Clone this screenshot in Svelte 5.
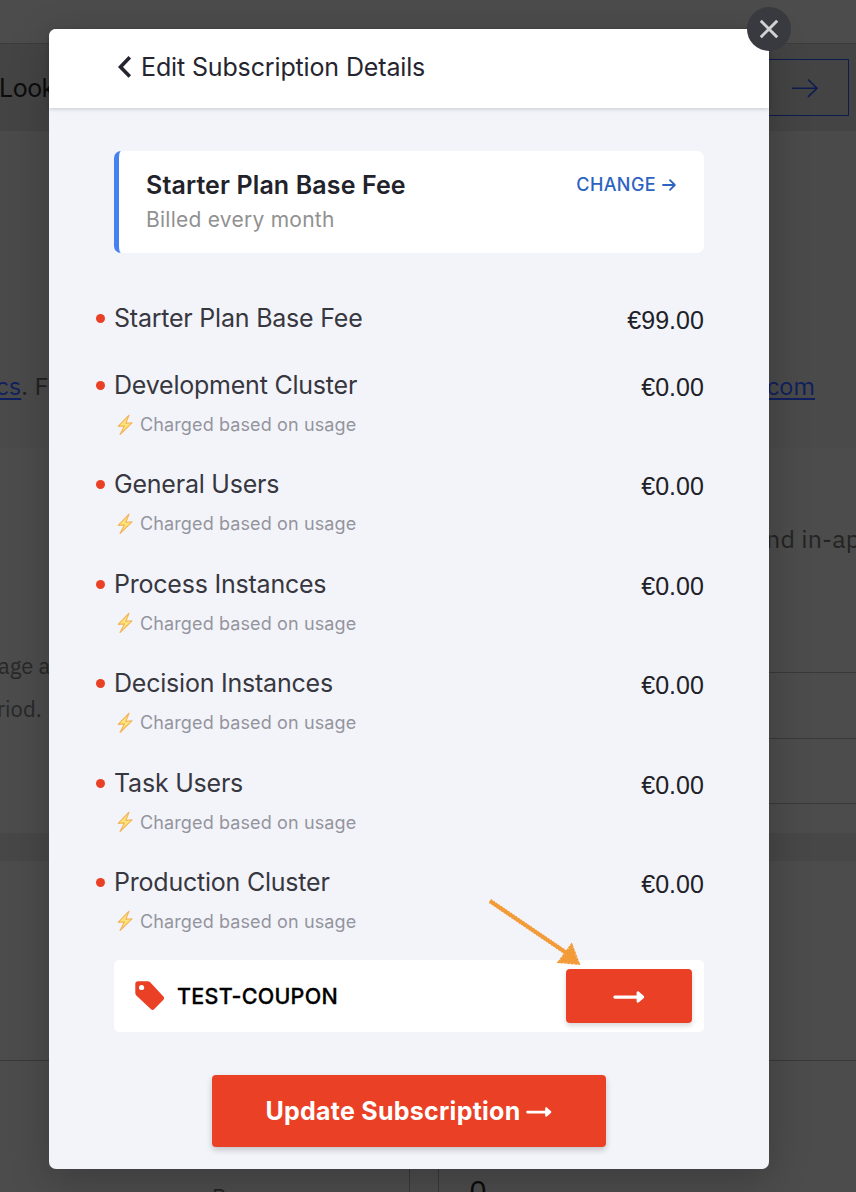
<script>
  const items = [
    { name: 'Starter Plan Base Fee', price: '€99.00', usage: false },
    { name: 'Development Cluster', price: '€0.00', usage: true },
    { name: 'General Users', price: '€0.00', usage: true },
    { name: 'Process Instances', price: '€0.00', usage: true },
    { name: 'Decision Instances', price: '€0.00', usage: true },
    { name: 'Task Users', price: '€0.00', usage: true },
    { name: 'Production Cluster', price: '€0.00', usage: true }
  ];
</script>

<div class="stage">
  <div class="page" aria-hidden="true">
    <div class="topbar"></div>
    <div class="banner">
      <span class="look">Look</span>
      <div class="banner-btn">
        <svg width="28" height="20" viewBox="0 0 28 20" fill="none" stroke="#0d1c50" stroke-width="1.6"><path d="M1 10.3h25M17 1.5l9 8.8-9 8.5" /></svg>
      </div>
    </div>
    <div class="notice">
      <p><span class="link">cs</span>. F</p>
      <p class="link com">com</p>
    </div>
    <div class="content">
      <div class="left">
        <p class="l1">age a</p>
        <p class="l2">riod.</p>
      </div>
      <div class="right">
        <p>nd in-ap</p>
        <div class="rule r1"></div>
        <div class="rule"></div>
        <div class="rule r3"></div>
      </div>
    </div>
    <div class="band"></div>
    <div class="panel"></div>
    <div class="tiles">
      <div class="tile first">P</div>
      <div class="tile second">0</div>
    </div>
  </div>

  <section class="modal">
    <header>
      <svg width="15" height="22" viewBox="0 0 15 22" fill="none" stroke="#25252f" stroke-width="3.6"><path d="M12.8 1.3 3.5 11l9.3 9.5" /></svg>
      <h1>Edit Subscription Details</h1>
    </header>
    <div class="body">
      <div class="plan">
        <div>
          <h2>Starter Plan Base Fee</h2>
          <p>Billed every month</p>
        </div>
        <a class="change">
          <span>CHANGE</span>
          <svg width="14" height="12" viewBox="0 0 14 12" fill="none" stroke="#2c63c0" stroke-width="1.8" stroke-linecap="round" stroke-linejoin="round"><path d="M1 6h11.8M8 1.2 12.8 6 8 10.8" /></svg>
        </a>
      </div>

      <ul>
        {#each items as item}
          <li class:usage={item.usage}>
            <i class="dot"></i>
            <div class="desc">
              <div class="name">{item.name}</div>
              {#if item.usage}
                <div class="sub">
                  <svg width="16" height="22" viewBox="0 0 16 22"><path d="M12 1.2 1.200 12.400l6.200-.5L3 20.500 15 8.800l-6.200.6z" fill="#ffe574" stroke="#f2b45c" stroke-width="1.1" stroke-linejoin="round" /></svg>
                  <span>Charged based on usage</span>
                </div>
              {/if}
            </div>
            <div class="price">{item.price}</div>
          </li>
        {/each}
      </ul>

      <div class="coupon">
        <svg width="30" height="30" viewBox="0 0 30 30"><path fill="#ea4025" fill-rule="evenodd" d="M3 .3h9.600c1 0 1.900.4 2.600 1l13.200 14.100c1 1 1 2.300 0 3.300l-9.300 9.600c-.9.9-2.200.9-3.100 0L1.300 14.400C.6 13.700.3 12.900.3 12V3C.3 1.400 1.400.3 3 .3zM6.600 3.900a2.600 2.600 0 1 0 0 5.200 2.600 2.600 0 0 0 0-5.200z" /></svg>
        <span class="code">TEST-COUPON</span>
        <button class="apply" aria-label="Apply">
          <svg width="32" height="12" viewBox="0 0 32 12"><path fill="#fff" d="M1.800 4.400H23.600V1.800c0-1.400 1.200-2 2.300-1.100l4.700 4.100c.8.700.8 1.700 0 2.400l-4.700 4.100c-1.100.9-2.300.3-2.300-1.100V7.800H1.800c-2 0-2-3.400 0-3.400z" /></svg>
        </button>
        <svg class="pointer" width="94" height="70" viewBox="0 0 94 70">
          <path d="M3 4 81 57" stroke="#f29b38" stroke-width="4.600" stroke-dasharray="1.500 1.500" />
          <path d="M3 4 81 57" stroke="#f29b38" stroke-width="3.800" />
          <path d="M84.500 48 91.500 66.500 72 65z" fill="#f29b38" stroke="#f29b38" stroke-width="2.500" stroke-dasharray="3 .5" />
        </svg>
      </div>

      <button class="update">
        <span>Update Subscription</span>
        <svg width="26" height="10" viewBox="0 0 32 12"><path fill="#fff" d="M1.800 4.400H23.600V1.800c0-1.400 1.200-2 2.300-1.100l4.700 4.100c.8.700.8 1.700 0 2.400l-4.700 4.100c-1.100.9-2.300.3-2.300-1.100V7.800H1.800c-2 0-2-3.400 0-3.400z" /></svg>
      </button>
    </div>
    <button class="close" aria-label="Close">
      <svg width="20" height="20" viewBox="0 0 20 20" stroke="#d2d2d5" stroke-width="3"><path d="M1.800 1.800 18.200 18.200M18.200 1.800 1.800 18.200" /></svg>
    </button>
  </section>
</div>

<style>
  :global(body) { margin: 0; }
  .stage { position: relative; width: 856px; height: 1192px; overflow: hidden; background: #4c4c4c; font-family: Inter, "Liberation Sans", sans-serif; }
  .stage * { box-sizing: border-box; }
  h1, h2, p, ul { margin: 0; padding: 0; font-weight: 400; }
  button { border: 0; padding: 0; font: inherit; }
  svg { display: block; flex: none; }

  .page { height: 1192px; display: flex; flex-direction: column; font-family: "IBM Plex Sans", "Noto Sans", sans-serif; color: #222; white-space: nowrap; }
  .page > div { flex-shrink: 0; }
  .topbar { height: 44px; border-bottom: 1px solid #3b3b3b; }
  .banner { height: 87px; background: #444; display: flex; justify-content: space-between; align-items: center; padding: 0 7px 0 0; color: #0c0c0c; font: 25px/34px Inter, sans-serif; }
  .look { padding-top: 1px; letter-spacing: -.5px; margin-left: -1px; }
  .banner-btn { width: 110px; height: 57px; border: 1px solid #0d1c50; display: flex; align-items: center; justify-content: flex-end; padding-right: 29px; }
  .notice { height: 317px; background: #4a4a4a; display: flex; justify-content: space-between; padding: 237px 41px 0 0; font-size: 25px; line-height: 36px; }
  .notice p:first-child { margin-left: -4px; letter-spacing: .3px; }
  .link { color: #10205e; text-decoration: underline; text-decoration-thickness: 2px; text-underline-offset: 3px; }
  .content { height: 385px; display: flex; justify-content: space-between; }
  .left { font-size: 22px; line-height: 30px; color: #282828; }
  .l1 { margin: 203px 0 0 -2px; }
  .l2 { margin: 13px 0 0 -3px; }
  .right { width: 90px; overflow: hidden; }
  .right p { margin-top: 73px; font-size: 25px; line-height: 36px; color: #242424; letter-spacing: .2px; }
  .rule { height: 66px; border-top: 1px solid #393939; }
  .r1 { margin-top: 115px; }
  .r3 { margin-top: -1px; height: 1px; }
  .band { height: 28px; background: #474747; }
  .panel { height: 200px; border-bottom: 1px solid #383838; }
  .tiles { height: 131px; display: flex; gap: 28px; padding-top: 90px; }
  .tile { overflow: hidden; height: 41px; flex: none; }
  .first { width: 410px; border-right: 1px solid #383838; padding: 31px 0 0 212px; font-size: 22px; line-height: 30px; }
  .second { width: 418px; border-left: 1px solid #383838; padding: 20px 0 0 30px; font-size: 30px; line-height: 40px; color: #0c0c0c; }

  .modal { position: absolute; left: 49px; top: 29px; width: 720px; height: 1140px; background: #f3f4f9; border-radius: 7px; box-shadow: 0 10px 40px rgba(0, 0, 0, .22); }
  header { position: relative; height: 79px; background: #fff; border-radius: 7px 7px 0 0; box-shadow: 0 1px 4px rgba(0, 0, 0, .18); display: flex; align-items: center; gap: 9px; padding: 0 0 3px 68px; color: #25252f; }
  h1 { font-size: 25px; line-height: 34px; letter-spacing: -.14px; }
  header svg { margin-top: -1px; }
  .body { padding: 43px 65px 0; }
  .plan { height: 102px; background: #fff; border-left: 5px solid #4681ee; border-radius: 7px; padding: 17px 27px 0; display: flex; justify-content: space-between; }
  h2 { font-size: 25px; line-height: 34px; font-weight: 600; color: #22222b; letter-spacing: .12px; }
  .plan p { font-size: 21px; line-height: 30px; color: #919191; margin-top: 3px; letter-spacing: .25px; }
  .change { height: 33px; display: flex; align-items: center; gap: 6px; padding-right: 1px; color: #2c63c0; font-size: 18px; font-weight: 500; letter-spacing: .4px; }
  ul { list-style: none; height: 657px; margin-top: 50px; }
  li { position: relative; display: flex; height: 67px; }
  li.usage { height: 99.4px; }
  .dot { width: 9px; height: 9px; border-radius: 50%; background: #ea4025; margin: 11px 9px 0 -18px; flex: none; }
  .desc { flex: 1; }
  .name { font-size: 25px; line-height: 31px; color: #37373f; letter-spacing: -.22px; }
  .sub { display: flex; align-items: center; gap: 7px; margin-top: 10px; padding-left: 3px; height: 27px; font-size: 18px; color: #94949e; letter-spacing: .12px; }
  .price { font: 25px/35px "Liberation Sans", Arial, sans-serif; color: #202027; letter-spacing: .05px; }
  .coupon { position: relative; height: 72px; background: #fff; border-radius: 5px; display: flex; align-items: center; padding: 0 12px 0 21px; }
  .coupon > svg:first-child { margin-top: -1px; }
  .code { flex: 1; margin-left: 12px; font-size: 21.5px; font-weight: 500; color: #000; letter-spacing: .25px; -webkit-text-stroke: .3px #000; }
  .apply { width: 126px; height: 54px; border-radius: 4px; background: #ea4025; box-shadow: 0 3px 5px rgba(0, 0, 0, .15); display: flex; align-items: center; justify-content: center; padding-top: 2px; }
  .pointer { position: absolute; left: 373px; top: -63px; fill: none; }
  .update { margin: 43px auto 0; width: 394px; height: 72px; border-radius: 4px; background: #ea4025; box-shadow: 0 3px 6px rgba(0, 0, 0, .2); display: flex; align-items: center; justify-content: center; gap: 6px; color: #fff; font-size: 25px; font-weight: 700; white-space: nowrap; letter-spacing: .25px; }
  .update svg { margin-top: 2px; }
  .close { position: absolute; left: 698px; top: -22px; width: 44px; height: 44px; border-radius: 50%; background: #393940; display: flex; align-items: center; justify-content: center; }
</style>
